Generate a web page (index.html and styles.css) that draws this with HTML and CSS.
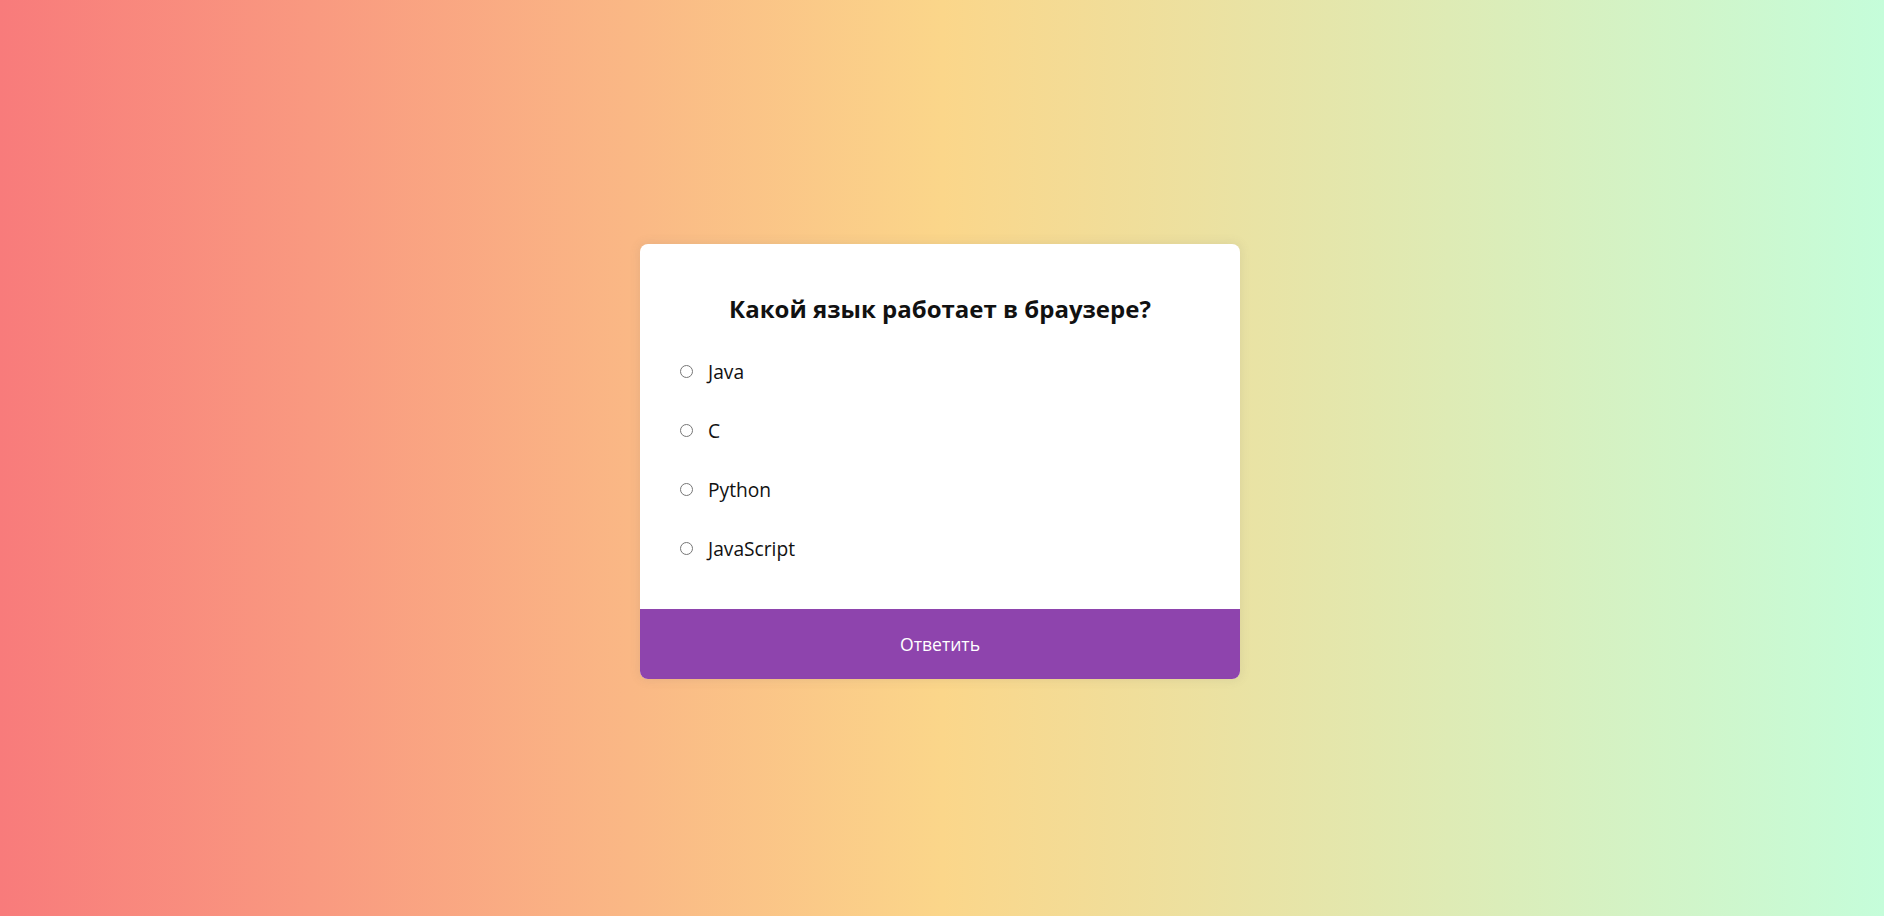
FILE: index.html
```html
<!DOCTYPE html>
<html lang="ru">
<head>
<meta charset="utf-8">
<title>Quiz</title>
<link rel="stylesheet" href="styles.css">
</head>
<body>
<div class="quiz">
  <div class="quiz-header">
    <h2 class="question">Какой язык работает в браузере?</h2>
    <ul class="answers">
      <li class="answer"><input type="radio" name="a" id="a1" class="radio"><label for="a1">Java</label></li>
      <li class="answer"><input type="radio" name="a" id="a2" class="radio"><label for="a2">C</label></li>
      <li class="answer"><input type="radio" name="a" id="a3" class="radio"><label for="a3">Python</label></li>
      <li class="answer"><input type="radio" name="a" id="a4" class="radio"><label for="a4">JavaScript</label></li>
    </ul>
  </div>
  <button class="submit">Ответить</button>
</div>
</body>
</html>
```
FILE: styles.css
```css
html, body {
  margin: 0;
  height: 100%;
}
body {
  font-family: "Open Sans", "Noto Sans", sans-serif;
  background: linear-gradient(to right, #f87b7b 0%, #fbd68a 50%, #c5fdda 100%);
  display: flex;
  align-items: center;
  justify-content: center;
}
.quiz {
  width: 600px;
  background: #fff;
  border-radius: 8px;
  box-shadow: 0 0 10px 2px rgba(100, 100, 100, 0.1);
  overflow: hidden;
  margin: 7px 4px 0 0;
}
.quiz-header {
  padding: 48px 35px 48px;
}
.question {
  margin: 0;
  text-align: center;
  font-size: 24px;
  line-height: 33px;
  font-weight: 700;
  color: #111;
}
.answers {
  list-style: none;
  margin: 33px 0 0;
  padding: 0;
  display: flex;
  flex-direction: column;
  gap: 33px;
}
.answer {
  display: flex;
  align-items: center;
  height: 26px;
  font-size: 19.2px;
  color: #111;
}
.radio {
  width: 13px;
  height: 13px;
  margin: 0 15px 0 5px;
}
.submit {
  display: block;
  width: 100%;
  border: none;
  background: #8e44ad;
  color: #fff;
  font-family: inherit;
  font-size: 17.6px;
  line-height: 24px;
  padding: 23px 0;
  cursor: pointer;
}
```
